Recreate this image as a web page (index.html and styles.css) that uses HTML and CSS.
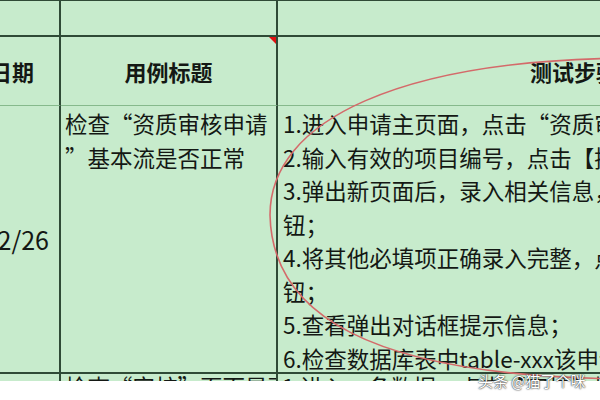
FILE: index.html
```html
<!DOCTYPE html>
<html lang="zh-CN">
<head>
<meta charset="utf-8">
<title>测试用例</title>
<link rel="stylesheet" href="styles.css">
</head>
<body>
<div class="page">
  <div class="sheet">
    <div class="grid">
      <div class="cell r0 c1"></div>
      <div class="cell r0 c2"></div>
      <div class="cell r0 c3"></div>

      <div class="cell r1 c1 head">执行日期</div>
      <div class="cell r1 c2 head">用例标题<span class="comment-mark"></span></div>
      <div class="cell r1 c3 head">测试步骤</div>

      <div class="cell r2 c1 date">2019/2/26</div>
      <div class="cell r2 c2 body">检查“资质审核申请<br>”基本流是否正常</div>
      <div class="cell r2 c3 body steps">
        <div>1.进入申请主页面，点击“资质审核申请”按钮；</div>
        <div>2.输入有效的项目编号，点击【提交】按钮；</div>
        <div>3.弹出新页面后，录入相关信息，点击【保存】按</div>
        <div>钮；</div>
        <div>4.将其他必填项正确录入完整，点击【提交】按</div>
        <div>钮；</div>
        <div>5.查看弹出对话框提示信息；</div>
        <div>6.检查数据库表中table-xxx该申请记录状态；</div>
      </div>

      <div class="cell r3 c1"></div>
      <div class="cell r3 c2 body next">检查“审核”页面是否正常</div>
      <div class="cell r3 c3 body next">1.进入一条数据，点击【审核】按钮；</div>
    </div>
  </div>
  <svg class="circle" width="600" height="400" viewBox="0 0 600 400">
    <path d="M 640 58 C 400 58, 270 120, 270 215 C 272 310, 360 379, 640 379" fill="none" stroke="#d46a6a" stroke-width="1.6"/>
  </svg>
  <div class="watermark">头条 @猫了个咪</div>
</div>
</body>
</html>
```
FILE: styles.css
```css
html, body {
  margin: 0;
  padding: 0;
  background: #ffffff;
}

.page {
  position: relative;
  width: 600px;
  height: 400px;
  overflow: hidden;
  background: #ffffff;
}

.sheet {
  height: 381px;
  overflow: hidden;
  background: #c7ebcc;
}

.grid {
  display: grid;
  grid-template-columns: 140px 217px 592px;
  grid-template-rows: 36px 69px 268px 40px;
  margin-left: -79px;
  border-top: 1px solid #2f4a36;
  font-family: "Noto Sans CJK SC", "Noto Sans", sans-serif;
  color: #141814;
}

.cell {
  box-sizing: border-box;
  border-right: 2px solid #2f4a36;
  position: relative;
  white-space: nowrap;
  overflow: hidden;
}

.c3 {
  border-right: none;
}

.r0 {
  border-bottom: 2px solid #2f4a36;
}

.r1 {
  border-bottom: 1px solid #86b98c;
}

.r2 {
  border-bottom: 2px solid #2f4a36;
}

.head {
  display: flex;
  align-items: center;
  justify-content: center;
  font-size: 22px;
  font-weight: 700;
  overflow: visible;
}

.comment-mark {
  position: absolute;
  top: 0;
  right: 0;
  width: 0;
  height: 0;
  border-top: 7px solid #e01010;
  border-left: 7px solid transparent;
}

.date {
  display: flex;
  align-items: center;
  justify-content: flex-end;
  padding-right: 10px;
  font-size: 25px;
}

.body {
  font-size: 22.5px;
  line-height: 33.5px;
  padding: 1px 0 0 4px;
}

.steps {
  padding-left: 5px;
}

.next {
  line-height: 22px;
  padding-top: 1px;
}

.circle {
  position: absolute;
  left: 0;
  top: 0;
  pointer-events: none;
}

.watermark {
  position: absolute;
  left: 478px;
  top: 372px;
  font-family: "Noto Sans CJK SC", sans-serif;
  font-size: 15px;
  line-height: 18px;
  color: #ffffff;
  text-shadow: 0 0 2px #333, 0 0 1px #222;
  white-space: nowrap;
}
```
